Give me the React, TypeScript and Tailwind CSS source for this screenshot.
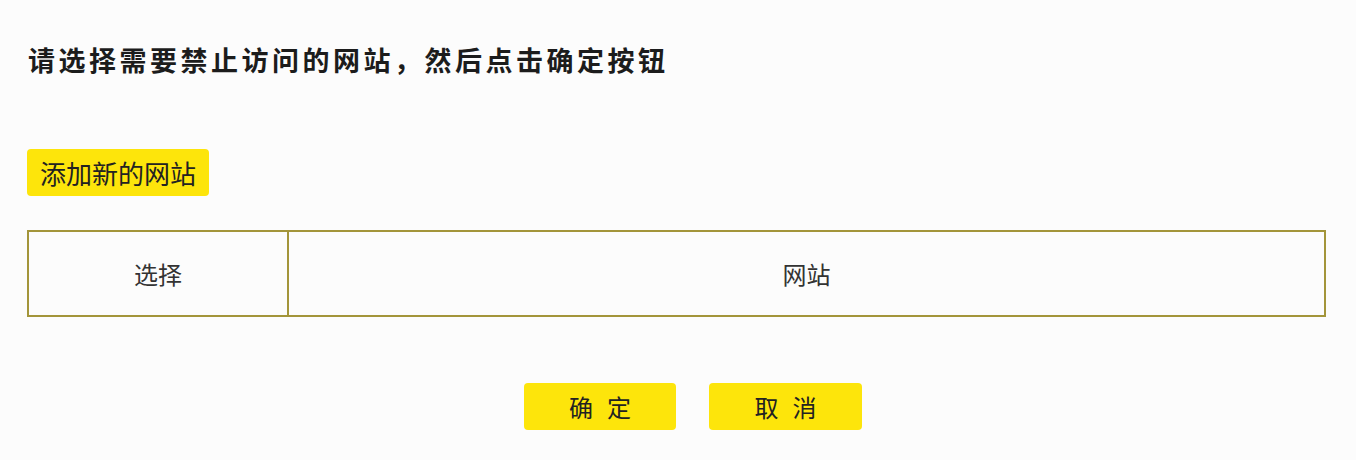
import React from "react";

const font = { fontFamily: '"Noto Sans CJK SC", "Noto Sans", sans-serif' };

const App: React.FC = () => {
  return (
    <div className="w-[1356px] h-[460px] bg-[#fcfcfc] text-[#333]" style={font}>
      <div className="pl-[28px] pt-[45px]">
        <h1 className="text-[27px] leading-[30px] font-bold tracking-[3.5px] text-[#1c1c1c]">
          请选择需要禁止访问的网站，然后点击确定按钮
        </h1>
      </div>

      <div className="pl-[27px] mt-[74px]">
        <button className="h-[47px] w-[182px] rounded-[4px] bg-[#fde50b] text-[26px] text-[#222] flex items-center justify-center">
          添加新的网站
        </button>
      </div>

      <div className="pl-[27px] pr-[30px] mt-[34px]">
        <table className="w-[1299px] border-collapse border-2 border-[#a3953a]">
          <thead>
            <tr className="h-[85px]">
              <th className="w-[260px] border-2 border-[#a3953a] text-[24px] font-normal text-[#333]">选择</th>
              <th className="border-2 border-[#a3953a] text-[24px] font-normal text-[#333]">网站</th>
            </tr>
          </thead>
        </table>
      </div>

      <div className="flex justify-center gap-[33px] pl-[30px] mt-[66px]">
        <button className="h-[47px] w-[152px] rounded-[4px] bg-[#fde50b] text-[24px] tracking-[14px] pl-[14px] text-[#222]">
          确定
        </button>
        <button className="h-[47px] w-[153px] rounded-[4px] bg-[#fde50b] text-[24px] tracking-[14px] pl-[14px] text-[#222]">
          取消
        </button>
      </div>
    </div>
  );
};

export default App;
